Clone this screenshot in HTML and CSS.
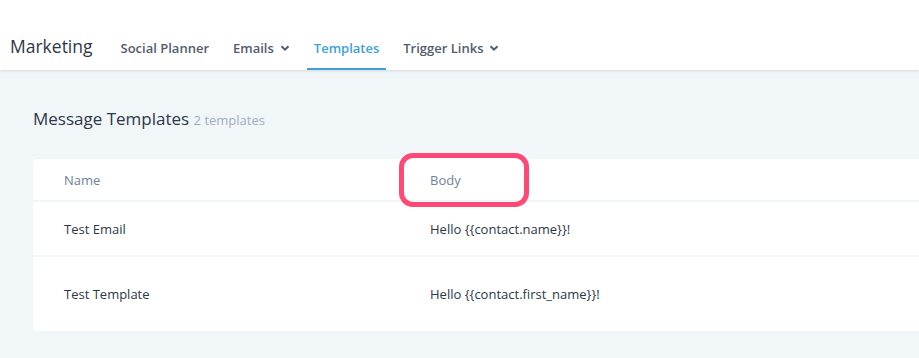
FILE: index.html
```html
<!DOCTYPE html>
<html>
<head>
<meta charset="utf-8">
<link rel="stylesheet" href="styles.css">
</head>
<body>
<header class="topbar">
  <div class="brand">Marketing</div>
  <nav class="nav">
    <a class="nav-item">Social Planner</a>
    <a class="nav-item">Emails <svg class="chev" viewBox="0 0 10 10" width="10" height="10"><path d="M1.5 3.2 L5 6.7 L8.5 3.2" fill="none" stroke="currentColor" stroke-width="2"/></svg></a>
    <a class="nav-item active">Templates</a>
    <a class="nav-item">Trigger Links <svg class="chev" viewBox="0 0 10 10" width="10" height="10"><path d="M1.5 3.2 L5 6.7 L8.5 3.2" fill="none" stroke="currentColor" stroke-width="2"/></svg></a>
  </nav>
</header>
<main class="content">
  <h1 class="title">Message Templates <span class="count">2 templates</span></h1>
  <div class="card">
    <div class="row head">
      <div class="col-name">Name</div>
      <div class="col-body">Body<span class="highlight"></span></div>
    </div>
    <div class="row r1">
      <div class="col-name">Test Email</div>
      <div class="col-body">Hello {{contact.name}}!</div>
    </div>
    <div class="row r2">
      <div class="col-name">Test Template</div>
      <div class="col-body">Hello {{contact.first_name}}!</div>
    </div>
  </div>
</main>
</body>
</html>
```

FILE: styles.css
```css
* { box-sizing: border-box; }
html, body { margin: 0; padding: 0; }
body {
  width: 919px;
  height: 358px;
  overflow: hidden;
  background: #f1f6f9;
  font-family: "Open Sans", "Noto Sans", sans-serif;
}
.topbar {
  height: 70px;
  background: #ffffff;
  display: flex;
  align-items: flex-end;
  padding-left: 10px;
  box-shadow: 0 1px 3px rgba(0,0,0,0.12);
  position: relative;
}
.brand {
  font-size: 17.5px;
  color: #2d3748;
  line-height: 24px;
  margin-bottom: 12px;
  margin-right: 21px;
}
.nav { display: flex; align-items: flex-end; height: 100%; }
.nav-item {
  display: flex;
  gap: 6px;
  height: 100%;
  padding: 0 7px 10px;
  margin-right: 10px;
  align-items: flex-end;
  font-size: 13px;
  font-weight: 600;
  color: #515c6c;
  border-bottom: 2px solid transparent;
  line-height: 20px;
}
.nav-item .chev { margin-bottom: 5px; }
.nav-item.active {
  color: #3ea0d9;
  border-bottom-color: #3ea0d9;
}
.content { padding: 0 0 0 33px; }
.title {
  margin: 0;
  padding-top: 37px;
  height: 89px;
  font-size: 17px;
  font-weight: 400;
  color: #2d3748;
  line-height: 24px;
}
.count { font-size: 13px; color: #a0aec0; }
.card {
  background: #fff;
  border-radius: 4px;
  width: 900px;
}
.row {
  display: flex;
  align-items: center;
  font-size: 13px;
  color: #2d3748;
}
.row.head { height: 43px; color: #718096; border-bottom: 2px solid #f1f6f9; }
.row.r1 { height: 55px; border-bottom: 2px solid #f1f6f9; }
.row.r2 { height: 74px; }
.col-name { width: 397px; padding-left: 31px; }
.col-body { flex: 1; position: relative; }
.head .col-body { align-self: stretch; display: flex; align-items: center; }
.highlight {
  position: absolute;
  left: -31px;
  top: -6px;
  width: 130px;
  height: 54px;
  border: 5px solid #ff4a76;
  border-radius: 14px;
}
```
